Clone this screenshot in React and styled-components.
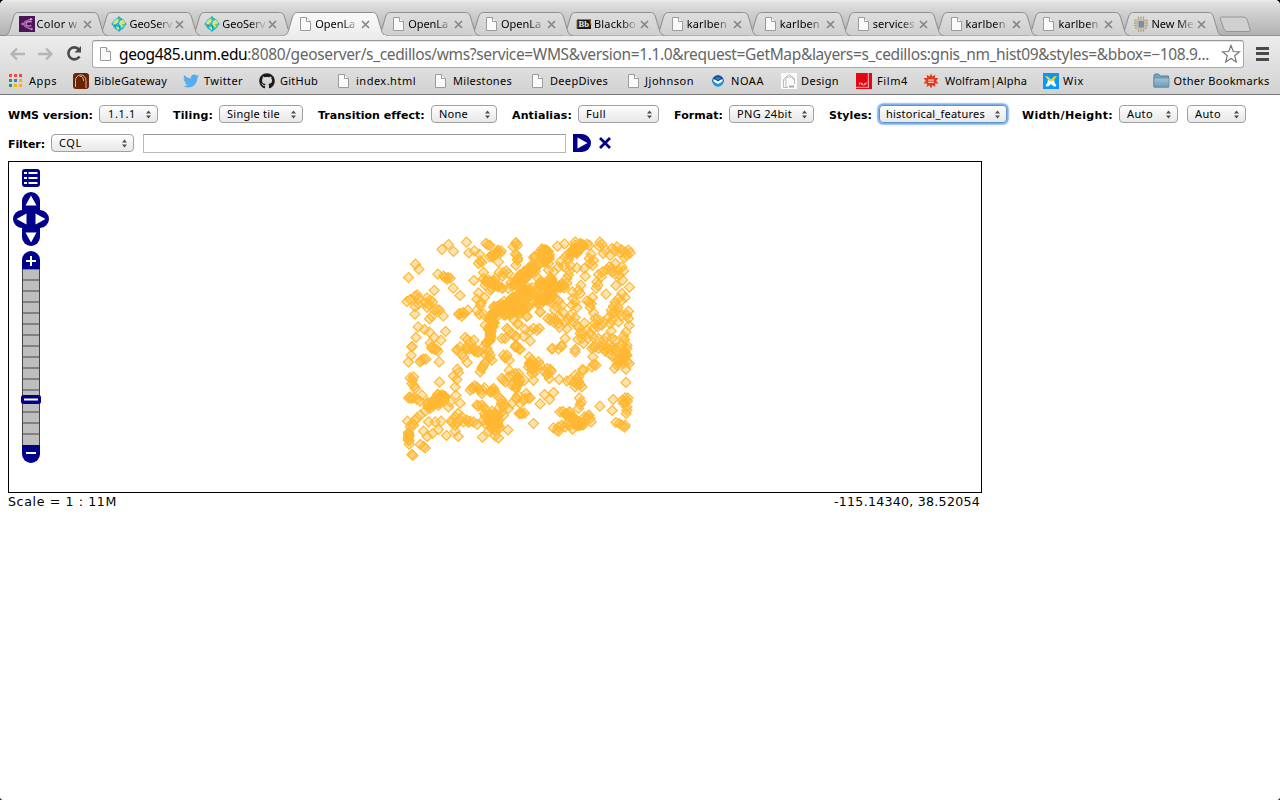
import React, { useLayoutEffect, useRef, useState } from "react";
import styled, { createGlobalStyle, css } from "styled-components";
import { FaGithub, FaTwitter } from "react-icons/fa";

const lucida = '"Lucida Grande", "Noto Sans", "Open Sans", sans-serif';
const verdana = 'Verdana, "DejaVu Sans", sans-serif';

const GlobalStyle = createGlobalStyle`
  * { box-sizing: border-box; }
  body { margin: 0; background: #000; overflow: hidden; }
`;

const Window = styled.div`
  display: flex;
  flex-direction: column;
  width: 1280px;
  height: 800px;
  background: #fff;
  border-radius: 5px 5px 3px 3px;
  overflow: hidden;
  font-family: ${lucida};
  font-size: 11px;
  color: #000;
`;

/* text tracked so that it fills a known width */
const Track = styled.span`
  display: inline-block;
  white-space: nowrap;
  flex: none;
`;

function Fit({ w, children }) {
  const ref = useRef(null);
  const [spacing, setSpacing] = useState(0);
  useLayoutEffect(() => {
    const natural = ref.current.getBoundingClientRect().width;
    const count = ref.current.textContent.length;
    setSpacing((w - natural) / count);
  }, [w]);
  return (
    <Track ref={ref} style={{ letterSpacing: spacing }}>
      {children}
    </Track>
  );
}

/* ---------- tab strip ---------- */

const TabStrip = styled.div`
  display: flex;
  align-items: flex-end;
  height: 36px;
  flex: none;
  padding-left: 5px;
  background: linear-gradient(#ececec 0, #e0e0e0 3px, #cecece 14px, #b3b3b3 34px);
  box-shadow: inset 0 -1px 0 #8f8f8f;
`;

const TabBox = styled.div`
  position: relative;
  display: flex;
  align-items: center;
  width: 103px;
  height: 24px;
  margin-right: -10.1px;
  padding-left: 13.5px;
  flex: none;
  z-index: ${(p) => p.$z};
`;

const TabShape = styled.svg`
  position: absolute;
  inset: 0;
`;

const TabIcon = styled.span`
  position: relative;
  display: flex;
  width: 16px;
  height: 16px;
`;

const TabTitle = styled.span`
  position: relative;
  width: 43px;
  margin-left: 2px;
  white-space: nowrap;
  line-height: 16px;
  mask-image: linear-gradient(90deg, #000 65%, rgba(0, 0, 0, 0.2) 95%);
`;

const CloseMark = styled.svg`
  position: relative;
  margin-left: 3px;
`;

const NewTab = styled.svg`
  margin: 0 0 3px 6px;
  align-self: flex-end;
`;

const PageIcon = () => (
  <svg width="16" height="16" viewBox="0 0 16 16">
    <path d="M3.500 1.500H9.500L13.500 5.500V14.500H3.500Z" fill="#fafafa" stroke="#9b9b9b" />
    <path d="M9.500 1.500V5.500H13.500" fill="#fff" stroke="#9b9b9b" />
  </svg>
);

const ColorIcon = () => (
  <svg width="16" height="16" viewBox="0 0 16 16">
    <rect width="16" height="16" fill="#4b1458" />
    <path d="M11.500 3.500L6.500 5.500Q3.500 8 6.500 10.500L11.500 13" fill="none" stroke="#a763a8" strokeWidth="1.800" />
    <path d="M13 6C9.500 5 7 6 7 8S9.500 10.500 12.500 9.500" fill="none" stroke="#d391c5" strokeWidth="1.200" />
    <circle cx="12" cy="3.300" r="1.300" fill="#d391c5" />
    <circle cx="12.500" cy="13" r="1.300" fill="#c57bbe" />
    <circle cx="3.500" cy="8" r="1.200" fill="#c57bbe" />
  </svg>
);

const GlobeIcon = () => (
  <svg width="16" height="16" viewBox="0 0 16 16">
    <path d="M8 0L15.800 8L8 16L0.200 8Z" fill="#17afd0" />
    <circle cx="8" cy="8" r="6.200" fill="#1fb5d2" />
    <path d="M3 5L6 2.500L8 4L7 6.500L5 8L4 10L2 8ZM9 5L12 3.500L14 7L13 10L10.500 12L9.500 9.500L8 8ZM5 10.500L8 11L8 14L6 13Z" fill="#dbe37b" />
    <path d="M7 1L9.500 3L8 4.500ZM11 8L14 8L12 11Z" fill="#6cbf79" />
    <path d="M3 8L5 9L4 11ZM8 9L9 11L8 12Z" fill="#087f9e" />
  </svg>
);

const BlackboardIcon = () => (
  <svg width="16" height="16" viewBox="0 0 16 16">
    <rect x="1" y="3.500" width="14" height="9.500" fill="#1b1a17" />
    <path d="M1 4V13M14 4L15 9" stroke="#8b7430" />
    <text x="2.500" y="11" fontFamily="Liberation Serif" fontWeight="bold" fontSize="8" fill="#e9e9e9" textLength="10.500" lengthAdjust="spacingAndGlyphs">Bb</text>
  </svg>
);

const ChipIcon = () => (
  <svg width="16" height="16" viewBox="0 0 16 16">
    <path d="M5.500 0.500V16M8 0.500V16M10.500 0.500V16M1 4.500H15M1 7H15M1 9.500H15M2 12H14" stroke="#b8a27e" strokeWidth="1.300" />
    <rect x="3.500" y="3.500" width="9" height="9.500" fill="#c8bda6" />
    <rect x="5.500" y="5" width="5.500" height="6.500" fill="#7391ab" />
  </svg>
);

const tabs = [
  [ColorIcon, "Color w", 41],
  [GlobeIcon, "GeoServ", 43],
  [GlobeIcon, "GeoServ", 43],
  [PageIcon, "OpenLa", 40, true],
  [PageIcon, "OpenLa", 40],
  [PageIcon, "OpenLa", 40],
  [BlackboardIcon, "Blackbo", 42],
  [PageIcon, "karlben", 40],
  [PageIcon, "karlben", 40],
  [PageIcon, "services", 42],
  [PageIcon, "karlben", 40],
  [PageIcon, "karlben", 40],
  [ChipIcon, "New Me", 42],
];

function Tab({ icon: Icon, title, titleWidth, active, z }) {
  return (
    <TabBox $z={active ? 30 : z}>
      <TabShape width="103" height="24" viewBox="0 0 103 24">
        <defs>
          <linearGradient id={active ? "tabOn" : "tabOff"} x1="0" y1="0" x2="0" y2="1">
            <stop offset="0" stopColor={active ? "#fafafa" : "#dedede"} />
            <stop offset="1" stopColor={active ? "#ededed" : "#cfcfcf"} />
          </linearGradient>
        </defs>
        <path
          d="M0 23.500C3 23 3.600 21 4.500 18.500L8.500 5C9.500 2 10.500 0.500 13.500 0.500H88.500C91.500 0.500 92.500 2 93.500 5L97.500 18.500C98.300 21 99 23 102.500 23.500"
          fill={active ? "url(#tabOn)" : "url(#tabOff)"}
          stroke="#8e8e8e"
        />
        {active && <path d="M1 23.500H102" stroke="#ededed" />}
      </TabShape>
      <TabIcon><Icon /></TabIcon>
      <TabTitle><Fit w={titleWidth}>{title}</Fit></TabTitle>
      <CloseMark width="9" height="9" viewBox="0 0 9 9">
        <path d="M1 1L8 8M8 1L1 8" stroke="#858585" strokeWidth="1.600" />
      </CloseMark>
    </TabBox>
  );
}

/* ---------- address bar ---------- */

const Chrome = styled.div`
  flex: none;
  height: 59px;
  background: linear-gradient(#ededed, #d2d2d2);
  border-bottom: 1px solid #777;
`;

const AddressRow = styled.div`
  display: flex;
  align-items: center;
  height: 32px;
  padding: 3px 9px 0 9px;
`;

const NavIcons = styled.svg`
  flex: none;
  margin-right: 2px;
`;

const AddressField = styled.div`
  display: flex;
  align-items: center;
  width: 1152px;
  height: 28px;
  flex: none;
  margin-top: 1px;
  padding-left: 4px;
  background: #fff;
  border: 1px solid #aaa;
  border-top-color: #999;
  border-radius: 3px;
  box-shadow: inset 0 1px 0 #e5e5e5;
  font-size: 15.5px;
  color: #666;

  > svg {
    flex: none;
  }
`;

const UrlText = styled.div`
  flex: none;
  margin: -1px 12px 0 6px;
  line-height: 24px;
`;

const Host = styled.span`
  color: #000;
`;

const StarMark = styled.svg`
  flex: none;
`;

const MenuMark = styled.div`
  width: 13px;
  height: 14px;
  margin-left: 12px;
  border-top: 3px solid #4a4a4a;
  border-bottom: 3px solid #4a4a4a;
  background: linear-gradient(transparent 2.500px, #4a4a4a 2.500px, #4a4a4a 5.500px, transparent 5.500px);
`;

/* ---------- bookmarks ---------- */

const BookmarkBar = styled.div`
  display: flex;
  align-items: center;
  height: 26px;
  padding-left: 8px;
`;

const BookmarkItem = styled.div`
  display: flex;
  align-items: center;
  width: ${(p) => p.$w}px;
  flex: none;
  line-height: 16px;
`;

const BookmarkIcon = styled.span`
  display: flex;
  width: ${(p) => p.$w}px;
  flex: none;
`;

const appColors = ["#f04b3a", "#f04b3a", "#f04b3a", "#1a9e5c", "#2a7de1", "#f6b400", "#1a9e5c", "#f6b400", "#f6b400"];
const AppsIcon = () => (
  <svg width="16" height="16" viewBox="0 0 16 16">
    {appColors.map((c, i) => (
      <rect key={i} x={1 + (i % 3) * 5} y={1 + Math.floor(i / 3) * 5} width="3" height="3" fill={c} />
    ))}
  </svg>
);
const BibleIcon = () => (
  <svg width="16" height="16" viewBox="0 0 16 16">
    <rect width="16" height="16" rx="3" fill="#6b2400" />
    <path d="M2.500 14V7.500A5.200 5.500 0 0 1 13 7.500V15M6.500 3.200C9.500 3 10.500 5 10.500 8" fill="none" stroke="#e3c8b8" strokeWidth="0.900" />
  </svg>
);
const NoaaIcon = () => (
  <svg width="16" height="16" viewBox="0 0 16 16">
    <circle cx="8" cy="8" r="5.800" fill="#1599df" />
    <path d="M2.200 8A5.800 5.800 0 0 1 13.800 8L8 9Z" fill="#144a94" />
    <path d="M2.500 6.500L5 6.500L8 8.500L11 6.500L13.500 6.500L11.500 9L8 11L4.500 9Z" fill="#fff" />
    <path d="M5 4.500H11L8 7Z" fill="#4b86c8" />
  </svg>
);
const DesignIcon = () => (
  <svg width="16" height="16" viewBox="0 0 16 16">
    <rect width="16" height="16" fill="#fafafa" />
    <path d="M2.500 6.500L8 1.500L13.500 5.500M2.500 6.500V14.500H7M13.500 5.500V11M4 7.500L6 4L11 4L13 7M5 7V14" fill="none" stroke="#bbb" />
    <rect x="8" y="12.500" width="5" height="2" fill="#aaa" />
  </svg>
);
const FilmIcon = () => (
  <svg width="16" height="16" viewBox="0 0 16 16">
    <rect width="16" height="16" fill="#e30613" />
    <path d="M12.300 0V14M0 14.300H13" stroke="#e6d3d3" strokeWidth="0.900" />
    <path d="M3.500 12V10H5.500V12M6.500 10V12H8.500V10M9.500 12V10H11.500" fill="none" stroke="#f5a0a0" strokeWidth="0.900" />
  </svg>
);
const WolframIcon = () => (
  <svg width="16" height="16" viewBox="0 0 16 16">
    <path d="M8 0.500L9.400 3.600L12.200 1.700L11.900 5.100L15.400 5.100L13.200 7.800L15.500 10.400L12.100 10.600L12.300 14L9.500 12.300L8 15.500L6.500 12.300L3.700 14L3.900 10.600L0.500 10.400L2.800 7.800L0.600 5.100L4.100 5.100L3.800 1.700L6.600 3.600Z" fill="#e4391d" />
    <path d="M5.200 7H10.800M5.200 9.200H10.800" stroke="#fff" strokeWidth="1.100" />
  </svg>
);
const WixIcon = () => (
  <svg width="16" height="16" viewBox="0 0 16 16">
    <rect width="16" height="16" fill="#0b97f5" />
    <path d="M5.500 6L8 8L10.500 6L11 9L13 13H10.500L8 10.500L5.500 13H3L5 9Z" fill="#fff" stroke="#fff" strokeWidth="0.800" />
    <path d="M2 3L5 3.500L8 6.500L11 3.500L14 3L10.500 7.500L8 8.500L5.500 7.500Z" fill="#f6d22b" />
  </svg>
);
const FolderIcon = () => (
  <svg width="17" height="16" viewBox="0 0 17 16">
    <defs>
      <linearGradient id="folder" x1="0" y1="0" x2="0" y2="1">
        <stop offset="0" stopColor="#a5c4d8" />
        <stop offset="1" stopColor="#6c9cba" />
      </linearGradient>
    </defs>
    <path d="M1 14V2.500Q1 1 2.500 1H5.500L7 3H15.500V14Z" fill="#7fa3ba" stroke="#527d98" />
    <path d="M1 5H16V13.500Q16 14 15.500 14H1.500Q1 14 1 13.500Z" fill="url(#folder)" stroke="#5c8aa6" strokeWidth="0.800" />
  </svg>
);
const TwitterIcon = () => <FaTwitter size={16} color="#55acee" />;
const GithubIcon = () => <FaGithub size={16} color="#1b1b1b" />;

/* icon, text, icon column, text width, whole width */
const bookmarks = [
  [AppsIcon, "Apps", 21, 28, 65],
  [BibleIcon, "BibleGateway", 21, 73, 110],
  [TwitterIcon, "Twitter", 21, 39, 76],
  [GithubIcon, "GitHub", 21, 38, 76],
  [PageIcon, "index.html", 21, 60, 97],
  [PageIcon, "Milestones", 21, 59, 97],
  [PageIcon, "DeepDives", 21, 58, 96],
  [PageIcon, "Jjohnson", 20, 49, 85],
  [NoaaIcon, "NOAA", 21, 33, 71],
  [DesignIcon, "Design", 20, 38, 75],
  [FilmIcon, "Film4", 21, 31, 67],
  [WolframIcon, "Wolfram|Alpha", 22, 82, 120],
  [WixIcon, "Wix", 20, 21, 109.5],
  [FolderIcon, "Other Bookmarks", 21, 96, 118],
];

/* ---------- map controls ---------- */

const Page = styled.main`
  padding: 10px 8px 0;
  font-family: ${verdana};
`;

const ControlRow = styled.div`
  display: flex;
  align-items: flex-start;
  height: 19px;
  margin-bottom: ${(p) => p.$gap}px;
`;

const Label = styled.label`
  width: ${(p) => p.$w}px;
  flex: none;
  font-weight: bold;
  line-height: 14px;
  padding-top: 4px;
`;

const SelectBox = styled.div`
  display: flex;
  align-items: center;
  justify-content: space-between;
  width: ${(p) => p.$w}px;
  height: 18px;
  flex: none;
  margin-right: ${(p) => p.$after}px;
  padding: 0 5px 0 ${(p) => p.$pad}px;
  border: 1px solid #a0a0a0;
  border-radius: 4px;
  background: linear-gradient(#fff, #f2f2f2 50%, #e8e8e8);
  font-family: ${lucida};
  line-height: 14px;
  ${(p) =>
    p.$focus &&
    css`
      border-color: #5c94d0;
      box-shadow: 0 0 0 1.500px #7fb0e6, 0 0 3px 1px #7fb0e6;
    `}
`;

const Arrows = () => (
  <svg width="7" height="9" viewBox="0 0 7 9">
    <path d="M1 3.500L3.500 0.500L6 3.500ZM1 5.500L3.500 8.500L6 5.500Z" fill="#4d4d4d" />
  </svg>
);

function Select({ w, after, focus, text, tw, pad = 7 }) {
  return (
    <SelectBox $w={w} $after={after} $focus={focus} $pad={pad}>
      <Fit w={tw}>{text}</Fit>
      <Arrows />
    </SelectBox>
  );
}

const FilterInput = styled.div`
  width: 423px;
  height: 19px;
  border: 1px solid #b8b8b8;
  border-top-color: #9a9a9a;
`;

const FilterButtons = styled.svg`
  margin-left: 7px;
`;

const MapFrame = styled.div`
  position: relative;
  width: 974px;
  height: 332px;
  border: 1px solid #000;
`;

const MapDrawing = styled.svg`
  display: block;
`;

const MapFooter = styled.div`
  display: flex;
  justify-content: space-between;
  width: 972px;
  padding-top: 1px;
  font-size: 12.6px;
  line-height: 16px;
`;

/* survey tiles: origin on screen, then point pairs at three units a pixel */
const tiles = [
  [395, 230, "160,43 140,58 175,64 214,36 221,68 238,62 253,72 278,44 272,40 284,46 308,60 300,72 292,80 315,68 318,62 310,95 250,100 260,96 255,92 61,102 71,117 40,142 128,132 145,138 150,142 158,142 165,144 155,147 236,151 174,174 194,196 117,181 265,127 362,38 354,50 366,46 361,72 367,90 362,105 368,85 312,126 325,128 333,122 340,130 322,138 265,145 272,155 280,150 290,160 298,152 290,175 285,180 270,165 310,168 322,175 300,145 296,168 250,188 245,207 258,217 268,202 256,225 245,240 253,252 265,252 35,214 45,208 60,198 66,194 70,205 60,229 70,222 59,252 95,203 105,210 112,215 100,222 90,218 96,232 118,240 126,238 133,240 144,257 103,266 110,258 190,252 200,258 208,250 218,240 203,247 195,250 69,290 88,298 103,306 117,322 137,330 151,304 62,322 105,338 50,349 110,355 124,356 186,358 210,322 217,328 225,336 236,330 222,356 212,352 240,356 270,285 345,255 355,268 368,280 330,255 340,300 350,310 330,325 362,318 335,295 320,325 362,345 296,232"],
  [515, 230, "3,38 5,75 127,48 148,41 55,82 60,78 88,62 95,60 102,72 95,85 85,75 90,95 100,100 155,75 150,80 160,88 170,60 180,45 185,70 195,40 205,45 190,55 180,35 172,70 222,45 215,42 228,72 222,85 235,90 225,98 232,105 254,36 252,48 260,42 264,70 272,60 285,75 290,55 300,62 305,50 315,68 318,58 328,82 335,75 345,68 340,60 330,65 210,138 207,115 185,113 165,105 145,108 135,95 130,110 160,135 162,122 155,145 197,165 190,180 195,190 172,185 173,205 170,225 185,232 180,215 147,165 135,170 140,160 155,158 250,133 258,140 262,125 245,155 248,165 243,174 275,118 282,110 300,100 290,125 310,120 320,110 325,122 300,132 312,135 290,115 322,150 302,166 343,171 272,192 320,190 310,205 330,202 318,212 232,202 222,215 228,220 215,212 225,232 235,248 300,215 295,228 288,240 308,232 300,245 340,243 335,255 318,258 312,245 340,265 342,286 310,275 290,250 290,270 280,262 285,280 265,275 260,285 252,270 240,265 238,280 248,290 235,295 208,279 180,262 175,275 185,285 165,255 160,268 190,292 155,295 205,310 215,300 200,325 188,328 218,325 225,310 195,310 235,322 250,325 265,330 272,322 268,345 288,302 290,325 300,330 328,328 332,305 325,318 335,345 320,345 310,352 240,350 230,355 250,355 290,352 275,355 150,325 140,348 130,356 110,356 180,358 205,340 118,240 125,230 130,212 120,205 140,225 105,215 145,248 135,262 130,280 98,265 105,270 115,275 110,262 120,268 133,292 150,275 75,245 35,258 15,250 8,282 30,298 45,302 55,295 65,300 72,295 0,320 25,318 45,332 5,350 20,235"],
  [395, 345, "50,5 48,30 40,50 110,5 118,12 128,18 132,50 78,45 85,42 92,42 75,50 185,15 195,5 215,10 205,35 216,52 200,28 238,18 245,20 252,20 232,10 275,10 280,20 270,28 282,38 290,45 265,5 285,30 265,60 260,70 255,80 270,52 262,65 187,72 190,82 175,92 185,103 180,125 182,150 195,174 133,111 55,95 45,98 52,105 50,115 57,122 60,130 40,158 48,160 55,158 65,162 80,150 45,155 160,185 90,198 130,180 165,170 105,190 75,168 75,210 65,218 60,225 50,235 55,240 37,228 45,245 40,262 42,270 38,280 42,287 42,297 100,230 120,230 138,228 85,258 130,253 112,265 96,274 75,298 85,304 90,308 50,328 53,331 154,271 189,274 180,258 188,205 180,215 170,225 185,230 195,225 200,215 205,230 215,225 220,232 180,240 170,232 246,238 235,230 225,228 262,276 280,258 338,254 310,278 300,272 265,225 270,235 270,212 290,198 300,205 320,200 325,210 260,180 250,182 245,180 265,185 270,192 268,205 310,190 325,185 320,165 318,175 315,160 328,178 350,175 340,190 362,160 372,205 368,150 225,135 230,128 238,122 245,125 250,132 260,145 262,135 235,130 268,128 290,135 298,138 295,130 300,145 288,140 285,140 342,75 350,90 360,85 368,95 340,95 320,100 325,105 330,110 355,115 362,125 370,110 350,120 368,120 325,30 330,38 342,45 335,30 360,5 372,12"],
  [515, 345, "15,12 112,10 138,2 180,20 235,5 233,35 235,58 230,65 242,60 265,10 270,18 278,8 290,15 285,28 295,32 305,20 300,10 260,5 320,40 310,55 325,55 335,50 298,70 332,72 342,55 330,20 335,10 335,30 315,50 328,40 305,60 202,73 205,76 180,90 185,100 178,110 190,108 185,118 180,125 195,118 200,125 190,95 42,35 50,45 60,55 70,50 45,60 55,70 60,80 50,75 40,65 75,60 55,105 50,85 65,65 95,70 105,72 90,80 100,85 95,88 102,100 108,78 132,103 155,107 165,105 332,112 10,85 5,100 15,105 5,120 10,115 28,105 2,130 33,145 40,160 25,165 30,160 15,175 5,160 45,158 15,205 28,204 20,205 75,176 88,148 103,163 115,142 55,235 193,158 198,170 195,178 190,190 254,183 294,163 291,196 322,165 330,158 337,168 328,170 338,158 335,185 333,205 325,175 335,195 302,232 312,235 320,240 328,246 330,240 208,215 218,212 215,220 225,220 228,230 222,210 115,248 125,255 130,245 140,240 150,245 130,258 155,235 165,240 172,252 195,240"],
  [475, 235, "145,110 158,100 172,95 178,65 200,50 222,70 170,158 155,165 140,170 182,195 195,230 160,215 155,244 130,235 142,228 220,105 235,110 190,130 228,128"],
];

/* crowded stretches: tile, start, end, count, spread */
const runs = [
  [4, 110, 150, 185, 92, 48, 11],
  [4, 202, 45, 220, 58, 14, 8],
  [4, 205, 60, 215, 78, 10, 8],
  [4, 72, 215, 178, 165, 46, 14],
  [4, 90, 238, 150, 205, 26, 10],
  [4, 62, 218, 45, 275, 26, 9],
  [4, 46, 275, 38, 325, 20, 6],
  [4, 195, 155, 232, 140, 20, 11],
  [4, 195, 200, 225, 175, 26, 12],
  [4, 235, 150, 268, 155, 12, 6],
  [0, 308, 62, 285, 82, 6, 3],
  [0, 275, 150, 320, 172, 8, 6],
  [1, 172, 70, 200, 42, 16, 7],
  [2, 92, 182, 148, 158, 22, 8],
  [2, 130, 150, 148, 152, 10, 6],
  [2, 294, 215, 300, 248, 32, 15],
  [2, 40, 265, 42, 285, 3, 2],
  [3, 135, 204, 168, 205, 8, 5],
  [3, 165, 215, 180, 222, 8, 7],
  [3, 178, 235, 203, 236, 12, 6],
  [3, 312, 50, 330, 20, 8, 8],
  [3, 45, 50, 55, 75, 5, 6],
];

const place = (tile, x, y) => [tile[0] + x / 3 - 8.8, tile[1] + y / 3 - 161.8];

const diamonds = [];
tiles.forEach((tile) => {
  tile[2].split(" ").forEach((pair) => {
    const [x, y] = pair.split(",").map(Number);
    diamonds.push(place(tile, x, y));
  });
});
let seed = 7;
const rand = () => {
  seed = (seed * 16807) % 2147483647;
  return seed / 2147483647;
};
runs.forEach(([t, x1, y1, x2, y2, n, s]) => {
  for (let i = 0; i < n; i += 1) {
    const f = n > 1 ? i / (n - 1) : 0;
    const x = x1 + (x2 - x1) * f + (rand() * 2 - 1) * s;
    const y = y1 + (y2 - y1) * f + (rand() * 2 - 1) * s;
    diamonds.push(place(tiles[t], x, y));
  }
});

const navy = "#00008b";

function ZoomPanel() {
  return (
    <g>
      <rect x="13" y="7" width="18" height="18" rx="3" fill={navy} />
      <path d="M15 11H18M15 16H18M15 21H18M19.500 11H28.500M19.500 16H28.500M19.500 21H28.500" stroke="#fff" strokeWidth="2" />
      <path d="M13 39A9 9 0 0 1 31 39V75A9 9 0 0 1 13 75Z" fill={navy} />
      <path d="M13 48A9 9 0 0 0 13 66M31 48A9 9 0 0 1 31 66" fill={navy} />
      <path d="M22 33.500L27.500 43.500H16.500ZM22 80.500L27.500 70.500H16.500ZM7.500 57L17.500 51.500V62.500ZM36.500 57L26.500 51.500V62.500Z" fill="#fff" />
      <path d="M13 107V98A9 9 0 0 1 31 98V107Z" fill={navy} />
      <path d="M17 99H27M22 94V104" stroke="#fff" strokeWidth="2" />
      <rect x="13" y="107" width="18" height="176" fill="#bebebe" />
      {Array.from({ length: 16 }, (_, i) => (
        <rect key={i} x="13" y={i ? 106 + i * 11 : 107} width="18" height={i ? 2 : 1} fill="#808080" />
      ))}
      <path d="M13.500 107V283M30.500 107V283" stroke="#444" />
      <path d="M13 283H31V292A9 9 0 0 1 13 292Z" fill={navy} />
      <path d="M17 291H27" stroke="#fff" strokeWidth="2" />
      <rect x="12" y="233" width="20" height="9" rx="2.500" fill={navy} />
      <path d="M15 237.500H29" stroke="#fff" strokeWidth="2" />
    </g>
  );
}

export default function App() {
  return (
    <Window>
      <GlobalStyle />
      <TabStrip>
        {tabs.map(([icon, title, titleWidth, active], i) => (
          <Tab key={i} icon={icon} title={title} titleWidth={titleWidth} active={active} z={20 - i} />
        ))}
        <NewTab width="33" height="17" viewBox="0 0 33 17">
          <path d="M1 2Q1 1 3 1H24Q27 1 28 3L31 13Q32 15.500 30 15.500H8Q6 15.500 5 13Z" fill="#d0d0d0" stroke="#959595" />
        </NewTab>
      </TabStrip>

      <Chrome>
        <AddressRow>
          <NavIcons width="81" height="18" viewBox="0 0 81 18">
            <path d="M16 9H2.500M8 3.500L2.500 9L8 14.500M29 9H42.500M37 3.500L42.500 9L37 14.500" fill="none" stroke="#b5b5b5" strokeWidth="2.400" />
            <path d="M70 4.500A6 6 0 1 0 70.500 11.500" fill="none" stroke="#4a4a4a" strokeWidth="2.600" />
            <path d="M72 1V7.500H65.500Z" fill="#4a4a4a" />
          </NavIcons>
          <AddressField>
            <PageIcon />
            <UrlText>
              <Fit w={1090}>
                <Host>geog485.unm.edu</Host>
                :8080/geoserver/s_cedillos/wms?service=WMS&amp;version=1.1.0&amp;request=GetMap&amp;layers=s_cedillos:gnis_nm_hist09&amp;styles=&amp;bbox=−108.9...
              </Fit>
            </UrlText>
            <StarMark width="20" height="20" viewBox="0 0 20 20">
              <path d="M10 1.500L12.300 7.500L18.500 7.800L13.700 11.700L15.300 18L10 14.500L4.700 18L6.300 11.700L1.500 7.800L7.700 7.500Z" fill="#fff" stroke="#777" strokeWidth="1.200" />
            </StarMark>
          </AddressField>
          <MenuMark />
        </AddressRow>
        <BookmarkBar>
          {bookmarks.map(([Icon, text, iw, tw, w], i) => (
            <BookmarkItem key={i} $w={w}>
              <BookmarkIcon $w={iw}><Icon /></BookmarkIcon>
              <Fit w={tw}>{text}</Fit>
            </BookmarkItem>
          ))}
        </BookmarkBar>
      </Chrome>

      <Page>
        <ControlRow $gap={10}>
          <Label $w={91}><Fit w={85}>WMS version:</Fit></Label>
          <Select w={59} after={15} text="1.1.1" tw={28} pad={8} />
          <Label $w={46}><Fit w={40}>Tiling:</Fit></Label>
          <Select w={84} after={15} text="Single tile" tw={53} />
          <Label $w={113}><Fit w={106}>Transition effect:</Fit></Label>
          <Select w={66} after={15} text="None" tw={29} />
          <Label $w={66}><Fit w={60}>Antialias:</Fit></Label>
          <Select w={81} after={15} text="Full" tw={20} />
          <Label $w={55}><Fit w={49}>Format:</Fit></Label>
          <Select w={85} after={15} text="PNG 24bit" tw={55} />
          <Label $w={50}><Fit w={43}>Styles:</Fit></Label>
          <Select w={128} after={15} text="historical_features" tw={99} pad={6} focus />
          <Label $w={97}><Fit w={91}>Width/Height:</Fit></Label>
          <Select w={59} after={9} text="Auto" tw={26} />
          <Select w={59} after={0} text="Auto" tw={26} />
        </ControlRow>
        <ControlRow $gap={8}>
          <Label $w={43}><Fit w={37}>Filter:</Fit></Label>
          <Select w={83} after={9} text="CQL" tw={23} />
          <FilterInput />
          <FilterButtons width="42" height="18" viewBox="0 0 42 18">
            <path d="M0 0H9A9 9 0 0 1 9 18H0Z" fill={navy} />
            <path d="M4.500 3.500L14.500 9L4.500 14.500Z" fill="#fff" />
            <path d="M27 4L37 14M37 4L27 14" stroke={navy} strokeWidth="2.800" />
          </FilterButtons>
        </ControlRow>

        <MapFrame>
          <MapDrawing width="972" height="330" viewBox="0 0 972 330">
            <g fill="#ffb833" fillOpacity="0.380" stroke="#ffb833" strokeWidth="1.200">
              {diamonds.map(([x, y], i) => (
                <path key={i} d={`M${x.toFixed(1)} ${(y - 5).toFixed(1)}l5 5l-5 5l-5 -5Z`} />
              ))}
            </g>
            <ZoomPanel />
          </MapDrawing>
        </MapFrame>
        <MapFooter>
          <Fit w={109}>Scale = 1 : 11M</Fit>
          <Fit w={146}>-115.14340, 38.52054</Fit>
        </MapFooter>
      </Page>
    </Window>
  );
}
